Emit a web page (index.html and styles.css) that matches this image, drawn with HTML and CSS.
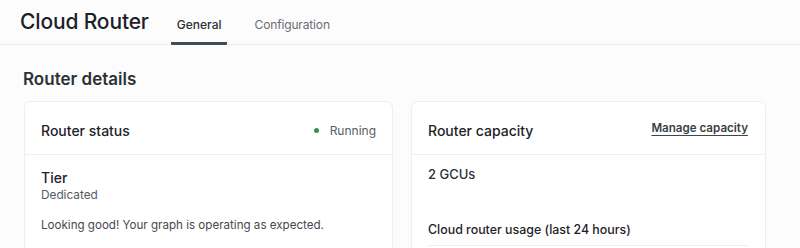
FILE: index.html
```html
<!DOCTYPE html>
<html>
<head>
<meta charset="utf-8">
<link rel="stylesheet" href="styles.css">
</head>
<body>
<header class="topbar">
  <h1 class="title">Cloud Router</h1>
  <nav class="tabs">
    <a class="tab active">General</a>
    <a class="tab">Configuration</a>
  </nav>
</header>
<main class="content">
  <h2 class="section-title">Router details</h2>
  <div class="cards">
    <section class="card">
      <div class="card-head">
        <span class="card-title">Router status</span>
        <span class="status"><span class="dot"></span>Running</span>
      </div>
      <div class="card-body">
        <div class="label">Tier</div>
        <div class="sub">Dedicated</div>
        <p class="msg">Looking good! Your graph is operating as expected.</p>
      </div>
    </section>
    <section class="card">
      <div class="card-head">
        <span class="card-title">Router capacity</span>
        <a class="link">Manage capacity</a>
      </div>
      <div class="card-body">
        <div class="gcu">2 GCUs</div>
        <div class="usage">Cloud router usage (last 24 hours)</div>
        <div class="rule"></div>
      </div>
    </section>
  </div>
</main>
</body>
</html>
```
FILE: styles.css
```css
* { box-sizing: border-box; }
html, body { margin: 0; padding: 0; }
body {
  background: #fcfcfc;
  font-family: Inter, "Noto Sans", sans-serif;
  color: #1f2328;
  width: 800px;
  height: 248px;
  overflow: hidden;
}
.topbar {
  display: flex;
  align-items: flex-end;
  height: 45px;
  border-bottom: 1px solid #ececec;
  padding-left: 20px;
}
.title {
  margin: 0 0 10px 0;
  font-size: 21px;
  font-weight: 500;
  color: #1c2128;
  line-height: 24px;
  letter-spacing: -0.15px;
}
.tabs {
  display: flex;
  margin-left: 22px;
}
.tab {
  font-size: 12px;
  color: #6a6e73;
  padding: 0 0 10px 0;
  margin-right: 34px;
  line-height: 14px;
  border-bottom: 2px solid transparent;
}
.tab.active {
  color: #2b3036;
  font-weight: 500;
  border-bottom: 3px solid #3e4b5c;
  border-radius: 1px;
  padding-left: 6px;
  padding-right: 5px;
  margin-bottom: -1px;
}
.tab:nth-child(2) { margin-left: -6px; letter-spacing: -0.15px; }
.content {
  padding: 24px 34px 0 24px;
}
.section-title {
  margin: 0 0 11px -1px;
  font-size: 17px;
  font-weight: 600;
  color: #2c3136;
  line-height: 21px;
}
.cards {
  display: grid;
  grid-template-columns: 369px 355px;
  gap: 18px;
}
.card {
  background: #fff;
  border: 1px solid #eeeeee;
  border-radius: 7px;
  min-height: 160px;
}
.card-head {
  display: flex;
  justify-content: space-between;
  align-items: center;
  height: 53px;
  padding: 0 16px;
  border-bottom: 1px solid #efefef;
}
.card-title {
  font-size: 14px;
  font-weight: 500;
  color: #1f2328;
  margin-top: 4px;
}
.status {
  display: flex;
  align-items: center;
  font-size: 12px;
  color: #585d63;
  margin-top: 4px;
}
.dot {
  width: 5px;
  height: 5px;
  border-radius: 50%;
  background: #3d8a5a;
  margin-right: 11px;
}
.link {
  font-size: 11.6px;
  font-weight: 600;
  color: #3a3f45;
  text-decoration: underline;
  text-underline-offset: 3px;
  text-decoration-color: #444;
  margin-top: 0;
  margin-right: 1px;
}
.card-body {
  padding: 14px 16px 0;
}
.label {
  font-size: 14px;
  font-weight: 500;
  color: #1f2328;
  line-height: 18px;
}
.sub {
  font-size: 11.8px;
  color: #555a60;
  line-height: 16px;
  margin-top: 0;
}
.msg {
  margin: 14px 0 0;
  font-size: 11.6px;
  color: #44494f;
  line-height: 16px;
}
.gcu {
  font-size: 13px;
  font-weight: 500;
  color: #2a2f35;
  line-height: 16px;
  margin-top: -3px;
}
.usage {
  margin-top: 40px;
  font-size: 12.4px;
  font-weight: 500;
  color: #1f2328;
  line-height: 16px;
}
.rule {
  margin-top: 7px;
  height: 1px;
  background: #efefef;
}
```
